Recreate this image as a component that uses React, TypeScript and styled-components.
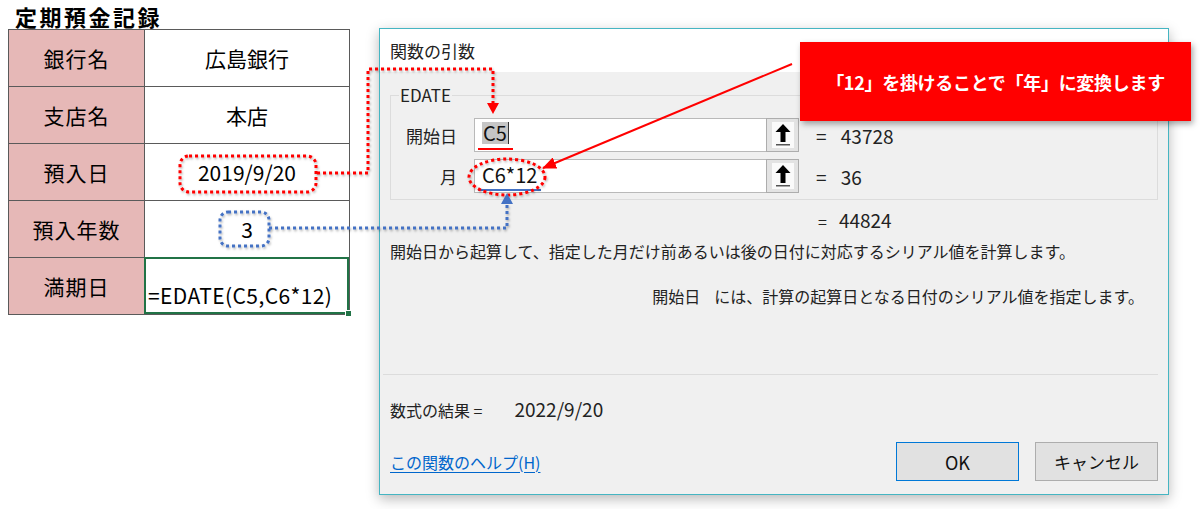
import React from "react";
import styled, { createGlobalStyle } from "styled-components";

const GlobalStyle = createGlobalStyle`
  html, body {
    margin: 0;
    padding: 0;
    background: #fff;
  }
  body {
    font-family: "Noto Sans CJK JP", "Noto Sans", sans-serif;
    color: #000;
  }
`;

const Page = styled.div`
  position: relative;
  display: flex;
  align-items: flex-start;
  width: 1200px;
  height: 509px;
  overflow: hidden;
`;

/* ---------- spreadsheet ---------- */

const Sheet = styled.div`
  margin-left: 8px;
  width: 342px;
`;

const SheetTitle = styled.div`
  padding: 3px 0 0 7px;
  font-size: 22px;
  font-weight: 700;
  line-height: 26px;
  letter-spacing: 2.5px;
  white-space: nowrap;
`;

const Table = styled.div`
  display: grid;
  grid-template-columns: 136px 205px;
  grid-auto-rows: 57px;
  border-left: 1px solid #5a5a5a;
  border-top: 1px solid #5a5a5a;
`;

const Cell = styled.div<{ $label?: boolean; $formula?: boolean }>`
  position: relative;
  display: flex;
  align-items: ${(p) => (p.$formula ? "flex-end" : "center")};
  justify-content: ${(p) => (p.$formula ? "flex-start" : "center")};
  padding: ${(p) => (p.$formula ? "0 0 4px 3px" : "0")};
  border-right: 1px solid #5a5a5a;
  border-bottom: 1px solid #5a5a5a;
  background: ${(p) => (p.$label ? "#e6b8b7" : "#fff")};
  font-size: 21px;
  letter-spacing: ${(p) => (p.$label ? "1px" : p.$formula ? "0.4px" : "0")};
  white-space: nowrap;
  ${(p) =>
    p.$formula &&
    `
    box-shadow: inset 0 0 0 2px #217346;
    margin: -1px 0 0 -1px;
    padding-left: 4px;
  `}
`;

const FillHandle = styled.span`
  position: absolute;
  right: -3px;
  bottom: -3px;
  width: 5px;
  height: 5px;
  background: #217346;
  border: 1px solid #fff;
`;

/* ---------- dialog ---------- */

const Dialog = styled.div`
  margin: 28px 0 0 29px;
  width: 788px;
  border: 1px solid #45b5c2;
  background: #f0f0f0;
  box-shadow: 0 4px 12px rgba(0, 0, 0, 0.28);
`;

const TitleBar = styled.div`
  display: flex;
  align-items: center;
  height: 43px;
  padding: 0 0 0 10px;
  background: #fff;
  font-size: 17px;
  color: #222;
`;

const TitleText = styled.span`
  flex: 1;
`;

const TitleButton = styled.span`
  width: 64px;
  text-align: center;
  font-size: 20px;
  color: #333;
`;

const Body = styled.div`
  padding: 0 10px 13px 10px;
`;

const GroupBox = styled.div`
  position: relative;
  margin-top: 23px;
  height: 105px;
  padding-top: 22px;
  box-sizing: border-box;
  border: 1px solid #dcdcdc;
`;

const Legend = styled.span`
  position: absolute;
  top: -13px;
  left: 8px;
  padding: 0 1px;
  background: #f0f0f0;
  font-size: 17px;
  line-height: 24px;
  color: #222;
`;

const ArgGrid = styled.div`
  display: grid;
  grid-template-columns: 83px 325px 1fr;
  grid-auto-rows: 34px;
  row-gap: 7px;
  align-items: center;
`;

const ArgLabel = styled.span`
  padding-right: 17px;
  text-align: right;
  font-size: 17px;
  color: #222;
`;

const ArgBox = styled.div`
  display: flex;
  height: 34px;
`;

const ArgField = styled.div`
  flex: 1;
  display: flex;
  align-items: flex-end;
  padding: 0 0 1px 3px;
  background: #fff;
  border: 1px solid #b9b9b9;
  border-right: none;
`;

const ArgText = styled.span<{ $line: string }>`
  display: inline-flex;
  align-items: center;
  height: 30px;
  padding: 0 4px;
  border-bottom: 2px solid ${(p) => p.$line};
  font-size: 20px;
  color: #111;
`;

const Selected = styled.span`
  background: #c6c6c6;
  line-height: 22px;
  padding: 0 1px;
  border-right: 1px solid #333;
`;

const RefButton = styled.div`
  display: flex;
  align-items: center;
  justify-content: center;
  width: 33px;
  background: #e3e3e3;
  border: 1px solid #adadad;
  box-sizing: border-box;
`;

const ArgResult = styled.span`
  padding-left: 17px;
  font-size: 19px;
  color: #222;
  word-spacing: 10px;
`;

const TextLine = styled.div<{ $top: number; $indent?: number; $right?: boolean }>`
  margin-top: ${(p) => p.$top}px;
  padding-left: ${(p) => p.$indent ?? 0}px;
  padding-right: ${(p) => (p.$right ? 14 : 0)}px;
  text-align: ${(p) => (p.$right ? "right" : "left")};
  line-height: 26px;
  font-size: 16px;
  color: #222;
  white-space: nowrap;
`;

const Gap = styled.span`
  display: inline-block;
  width: 14px;
`;

const Number = styled.span<{ $gap?: number }>`
  margin-left: ${(p) => p.$gap ?? 12}px;
  font-size: 19px;
`;

const Separator = styled.hr`
  margin: 65px 0 0 -7px;
  border: none;
  border-top: 1px solid #dcdcdc;
`;

const Footer = styled.div`
  display: flex;
  align-items: center;
  justify-content: space-between;
  margin-top: 19px;
`;

const HelpLink = styled.a`
  font-size: 16px;
  color: #0066cc;
  text-decoration: underline;
  text-underline-offset: 3px;
`;

const Buttons = styled.div`
  display: flex;
  gap: 16px;
`;

const DialogButton = styled.button<{ $primary?: boolean }>`
  width: 123px;
  height: 39px;
  background: #e1e1e1;
  border: 1px solid ${(p) => (p.$primary ? "#0078d7" : "#adadad")};
  font-family: inherit;
  font-size: ${(p) => (p.$primary ? "18px" : "17px")};
  color: #111;
`;

/* ---------- annotations ---------- */

const Overlay = styled.svg`
  position: absolute;
  left: 0;
  top: 0;
  pointer-events: none;
`;

const Callout = styled.div`
  position: absolute;
  left: 800px;
  top: 42px;
  width: 391px;
  height: 79px;
  display: flex;
  align-items: center;
  justify-content: center;
  background: #ff0000;
  box-shadow: 2px 3px 6px rgba(0, 0, 0, 0.35);
  color: #fff;
  font-size: 18px;
  font-weight: 700;
  letter-spacing: -0.3px;
`;

const RefIcon = () => (
  <svg width="22" height="26" viewBox="0 0 22 26">
    <rect x="0" y="0" width="22" height="26" fill="#fafafa" />
    <path d="M11 2 L18.5 10 H13.5 V20 H8.5 V10 H3.5 Z" fill="#000" />
    <rect x="4" y="22" width="14" height="1.5" fill="#555" />
  </svg>
);

const rows: [string, string][] = [
  ["銀行名", "広島銀行"],
  ["支店名", "本店"],
  ["預入日", "2019/9/20"],
  ["預入年数", "3"],
];

export default function App() {
  return (
    <Page>
      <GlobalStyle />
      <Sheet>
        <SheetTitle>定期預金記録</SheetTitle>
        <Table>
          {rows.map(([label, value]) => (
            <React.Fragment key={label}>
              <Cell $label>{label}</Cell>
              <Cell>{value}</Cell>
            </React.Fragment>
          ))}
          <Cell $label>満期日</Cell>
          <Cell $formula>
            =EDATE(C5,C6*12)
            <FillHandle />
          </Cell>
        </Table>
      </Sheet>

      <Dialog>
        <TitleBar>
          <TitleText>関数の引数</TitleText>
          <TitleButton>?</TitleButton>
          <TitleButton>×</TitleButton>
        </TitleBar>
        <Body>
          <GroupBox>
            <Legend>EDATE</Legend>
            <ArgGrid>
              <ArgLabel>開始日</ArgLabel>
              <ArgBox>
                <ArgField>
                  <ArgText $line="#ff0000">
                    <Selected>C5</Selected>
                  </ArgText>
                </ArgField>
                <RefButton>
                  <RefIcon />
                </RefButton>
              </ArgBox>
              <ArgResult>= 43728</ArgResult>

              <ArgLabel>月</ArgLabel>
              <ArgBox>
                <ArgField>
                  <ArgText $line="#4472c4">C6*12</ArgText>
                </ArgField>
                <RefButton>
                  <RefIcon />
                </RefButton>
              </ArgBox>
              <ArgResult>= 36</ArgResult>
            </ArgGrid>
          </GroupBox>

          <TextLine $top={7} $indent={428}>
            =<Number>44824</Number>
          </TextLine>
          <TextLine $top={4}>
            開始日から起算して、指定した月だけ前あるいは後の日付に対応するシリアル値を計算します。
          </TextLine>
          <TextLine $top={19} $right>
            開始日<Gap />には、計算の起算日となる日付のシリアル値を指定します。
          </TextLine>

          <Separator />

          <TextLine $top={21}>
            数式の結果 =<Number $gap={32}>2022/9/20</Number>
          </TextLine>

          <Footer>
            <HelpLink>この関数のヘルプ(H)</HelpLink>
            <Buttons>
              <DialogButton $primary>OK</DialogButton>
              <DialogButton>キャンセル</DialogButton>
            </Buttons>
          </Footer>
        </Body>
      </Dialog>

      <Overlay width="1200" height="509" viewBox="0 0 1200 509">
        <defs>
          <marker
            id="redHead"
            markerWidth="14"
            markerHeight="12"
            refX="13"
            refY="6"
            orient="auto"
            markerUnits="userSpaceOnUse"
          >
            <path d="M0 0 L14 6 L0 12 Z" fill="#ff0000" />
          </marker>
          <filter id="soft" x="-10%" y="-10%" width="120%" height="120%">
            <feDropShadow dx="1" dy="1.5" stdDeviation="1" floodOpacity="0.3" />
          </filter>
        </defs>

        <g filter="url(#soft)" fill="none" strokeWidth="3" strokeDasharray="3 3">
          <rect x="180" y="156" width="136" height="36" rx="9" stroke="#ff0000" />
          <path d="M317 173 H368 V69 H493 V104" stroke="#ff0000" />
          <rect x="220" y="212" width="49" height="34" rx="8" stroke="#4472c4" />
          <path d="M269 228 H507 V203" stroke="#4472c4" />
          <ellipse cx="507" cy="177" rx="38" ry="18" stroke="#ff0000" />
        </g>
        <path d="M487 103 H499 L493 114 Z" fill="#ff0000" />
        <path d="M501 204 H513 L507 193 Z" fill="#4472c4" />

        <line
          x1="792"
          y1="64"
          x2="543"
          y2="168"
          stroke="#ff0000"
          strokeWidth="2"
          markerEnd="url(#redHead)"
        />
      </Overlay>

      <Callout>「12」を掛けることで「年」に変換します</Callout>
    </Page>
  );
}
